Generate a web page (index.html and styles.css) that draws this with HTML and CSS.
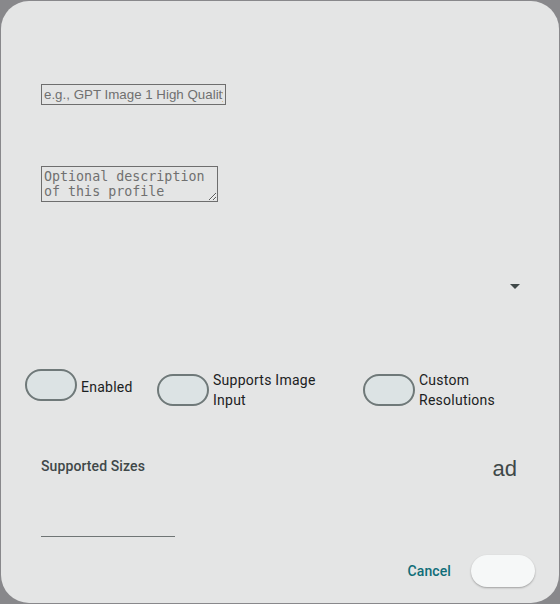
FILE: index.html
```html
<!DOCTYPE html>
<html>
<head>
<meta charset="utf-8">
<link rel="stylesheet" href="styles.css">
</head>
<body>
<div class="dialog">
  <div class="content">
    <div class="field field-name">
      <input class="text-input" type="text" placeholder="e.g., GPT Image 1 High Quality">
    </div>
    <div class="field field-desc">
      <textarea class="text-area" placeholder="Optional description of this profile"></textarea>
    </div>
    <div class="select-row">
      <span class="select-arrow"></span>
    </div>
    <div class="toggles">
      <div class="toggle toggle-a">
        <span class="switch"></span>
        <span class="toggle-label">Enabled</span>
      </div>
      <div class="toggle toggle-b">
        <span class="switch"></span>
        <span class="toggle-label">Supports Image Input</span>
      </div>
      <div class="toggle toggle-c">
        <span class="switch"></span>
        <span class="toggle-label">Custom Resolutions</span>
      </div>
    </div>
    <div class="sizes-head">
      <span class="sizes-title">Supported Sizes</span>
      <span class="icon-add">ad</span>
    </div>
    <div class="sizes-input"></div>
  </div>
  <div class="actions">
    <span class="btn-cancel">Cancel</span>
    <span class="btn-save"></span>
  </div>
</div>
</body>
</html>
```

FILE: styles.css
```css
* { box-sizing: border-box; }
html, body { margin: 0; padding: 0; }
body {
  background: #88888b;
  width: 560px;
  height: 604px;
  overflow: hidden;
  font-family: Roboto, "Noto Sans", sans-serif;
}
.dialog {
  margin: 1px;
  width: 558px;
  height: 602px;
  border-radius: 28px;
  background: #e4e5e5;
  display: flex;
  flex-direction: column;
  padding: 0 24px;
}
.content {
  display: flex;
  flex-direction: column;
}
.field { padding-left: 16px; display: flex; }
.field-name { margin-top: 83px; }
.text-input {
  width: 185px;
  height: 21px;
  margin: 0;
  border: 1px solid #6e6e6e;
  padding: 1px 2px;
  background: transparent;
  font-family: "Liberation Sans", Arial, sans-serif;
  font-size: 13.333px;
  color: #222;
}
.text-input::placeholder { color: #707070; }
.field-desc { margin-top: 61px; }
.text-area {
  width: 177px;
  height: 36px;
  margin: 0;
  border: 1px solid #6e6e6e;
  padding: 2px;
  background: transparent;
  font-family: "DejaVu Sans Mono", monospace;
  font-size: 13.333px;
  line-height: 15px;
  color: #222;
  resize: both;
  overflow: hidden;
}
.text-area::placeholder { color: #707070; }
.select-row {
  margin-top: 82px;
  display: flex;
  justify-content: flex-end;
  padding-right: 15px;
}
.select-arrow {
  width: 0;
  height: 0;
  border-left: 5px solid transparent;
  border-right: 5px solid transparent;
  border-top: 5px solid #3f4848;
}
.toggles {
  margin-top: 80px;
  display: flex;
  align-items: flex-start;
}
.toggle {
  display: flex;
  align-items: center;
  gap: 4px;
}
.toggle-a { width: 132px; }
.toggle-b { width: 206px; }
.toggle-b .toggle-label { width: 126px; }
.toggle-c { flex: 1; }
.switch {
  width: 52px;
  height: 32px;
  flex: none;
  border: 2px solid #6f7979;
  border-radius: 16px;
  background: #dce3e4;
}
.toggle-label {
  font-size: 14px;
  line-height: 20px;
  letter-spacing: 0.25px;
  color: #1b2122;
}
.toggle-a .toggle-label { margin-top: 3px; }
.toggle-b .toggle-label, .toggle-c .toggle-label { padding-top: 1px; }
.sizes-head {
  margin-top: 46px;
  padding-left: 16px;
  padding-right: 18px;
  display: flex;
  justify-content: space-between;
  align-items: center;
  height: 24px;
}
.sizes-title {
  font-size: 14px;
  font-weight: 500;
  letter-spacing: 0.1px;
  color: #3f4849;
  margin-top: -4px;
}
.icon-add {
  font-family: "Liberation Sans", Arial, sans-serif;
  font-size: 22px;
  line-height: 24px;
  color: #3f4849;
  white-space: nowrap;
  margin-top: 2px;
}
.sizes-input {
  margin-top: 56px;
  margin-left: 16px;
  width: 134px;
  height: 1px;
  background: #6f7575;
}
.actions {
  margin-top: 18px;
  display: flex;
  justify-content: flex-end;
  align-items: center;
  gap: 20px;
}
.btn-cancel {
  font-size: 14px;
  font-weight: 500;
  letter-spacing: 0.1px;
  color: #0f6d78;
  line-height: 20px;
}
.btn-save {
  width: 64px;
  height: 32px;
  border-radius: 16px;
  background: #f6f8f8;
  box-shadow: 0 1px 2px rgba(0,0,0,0.3);
}
```
